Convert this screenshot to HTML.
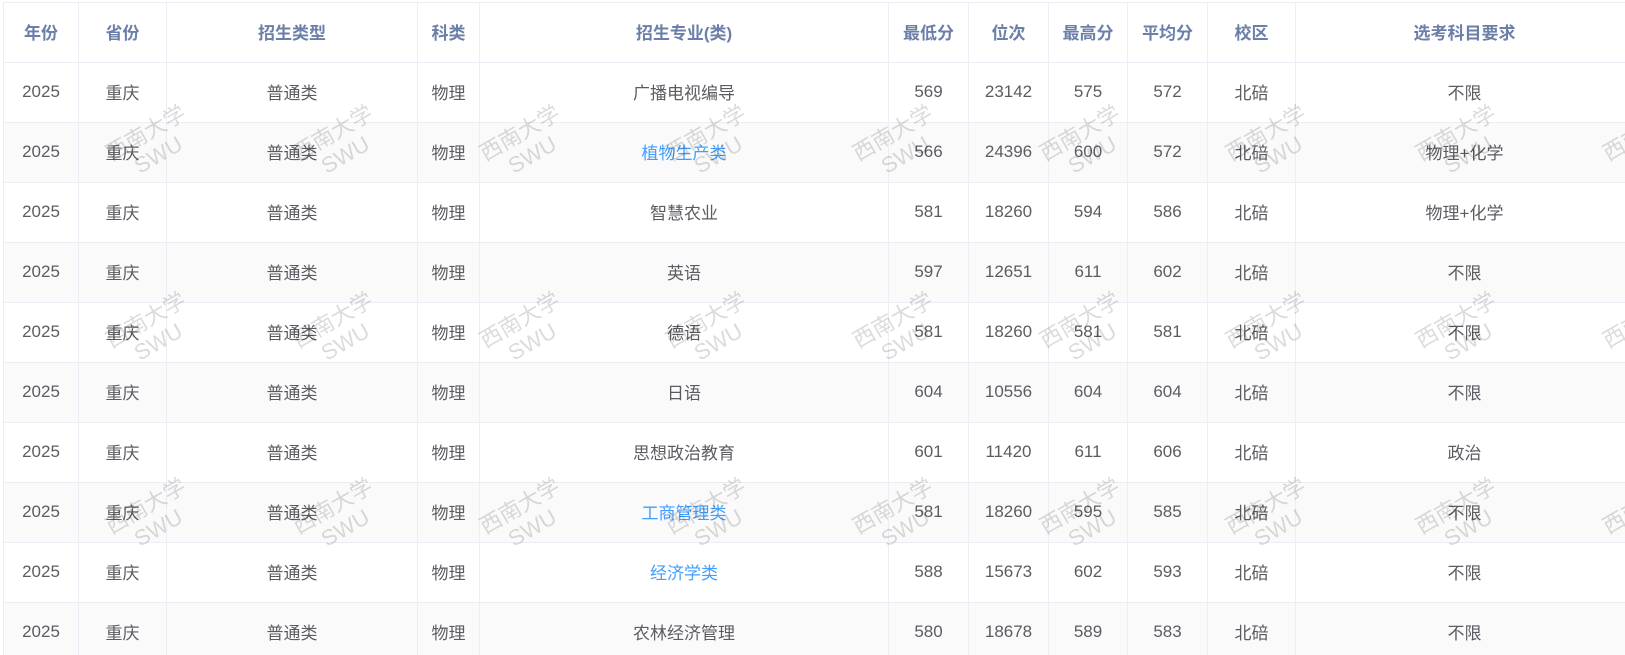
<!DOCTYPE html>
<html><head><meta charset="utf-8"><style>
html,body{margin:0;padding:0;background:#fff;width:1625px;height:655px;overflow:hidden;position:relative}
table{position:absolute;left:3px;top:2px;border-collapse:collapse;table-layout:fixed;width:1630px;font-family:"Liberation Sans","Noto Sans CJK SC",sans-serif;font-size:17px;color:#5a5c61}
td,th{border:1px solid #ebeef5;text-align:center;height:57px;padding:0 0 2px 0;white-space:nowrap;box-sizing:content-box}
th{color:#6c7fa9;font-weight:bold}
tr:nth-child(odd) td{background:#fafafa}
.l{color:#409eff}
.wm{position:absolute;width:130px;margin-left:-65px;margin-top:-26px;text-align:center;transform:rotate(-30deg);color:rgba(0,0,0,0.14);font-family:"Liberation Sans","Noto Sans CJK SC",sans-serif;font-size:22px;line-height:25px;pointer-events:none}
</style></head><body>
<table>
<colgroup><col style="width:75px"><col style="width:88px"><col style="width:251px"><col style="width:62px"><col style="width:409px"><col style="width:80px"><col style="width:80px"><col style="width:79px"><col style="width:80px"><col style="width:88px"><col style="width:338px"></colgroup>
<tr><th>年份</th><th>省份</th><th>招生类型</th><th>科类</th><th>招生专业(类)</th><th>最低分</th><th>位次</th><th>最高分</th><th>平均分</th><th>校区</th><th>选考科目要求</th></tr>
<tr><td>2025</td><td>重庆</td><td>普通类</td><td>物理</td><td>广播电视编导</td><td>569</td><td>23142</td><td>575</td><td>572</td><td>北碚</td><td>不限</td></tr>
<tr><td>2025</td><td>重庆</td><td>普通类</td><td>物理</td><td class="l">植物生产类</td><td>566</td><td>24396</td><td>600</td><td>572</td><td>北碚</td><td>物理+化学</td></tr>
<tr><td>2025</td><td>重庆</td><td>普通类</td><td>物理</td><td>智慧农业</td><td>581</td><td>18260</td><td>594</td><td>586</td><td>北碚</td><td>物理+化学</td></tr>
<tr><td>2025</td><td>重庆</td><td>普通类</td><td>物理</td><td>英语</td><td>597</td><td>12651</td><td>611</td><td>602</td><td>北碚</td><td>不限</td></tr>
<tr><td>2025</td><td>重庆</td><td>普通类</td><td>物理</td><td>德语</td><td>581</td><td>18260</td><td>581</td><td>581</td><td>北碚</td><td>不限</td></tr>
<tr><td>2025</td><td>重庆</td><td>普通类</td><td>物理</td><td>日语</td><td>604</td><td>10556</td><td>604</td><td>604</td><td>北碚</td><td>不限</td></tr>
<tr><td>2025</td><td>重庆</td><td>普通类</td><td>物理</td><td>思想政治教育</td><td>601</td><td>11420</td><td>611</td><td>606</td><td>北碚</td><td>政治</td></tr>
<tr><td>2025</td><td>重庆</td><td>普通类</td><td>物理</td><td class="l">工商管理类</td><td>581</td><td>18260</td><td>595</td><td>585</td><td>北碚</td><td>不限</td></tr>
<tr><td>2025</td><td>重庆</td><td>普通类</td><td>物理</td><td class="l">经济学类</td><td>588</td><td>15673</td><td>602</td><td>593</td><td>北碚</td><td>不限</td></tr>
<tr><td>2025</td><td>重庆</td><td>普通类</td><td>物理</td><td>农林经济管理</td><td>580</td><td>18678</td><td>589</td><td>583</td><td>北碚</td><td>不限</td></tr>
</table>
<div id="w"></div>
<script>
var xs=[152,339,526,712,899,1086,1272,1462,1649],ys=[145,332,518],h='';
ys.forEach(function(y){xs.forEach(function(x){h+='<div class="wm" style="left:'+x+'px;top:'+y+'px">西南大学<br>SWU</div>';});});
document.getElementById('w').innerHTML=h;
</script>
</body></html>
